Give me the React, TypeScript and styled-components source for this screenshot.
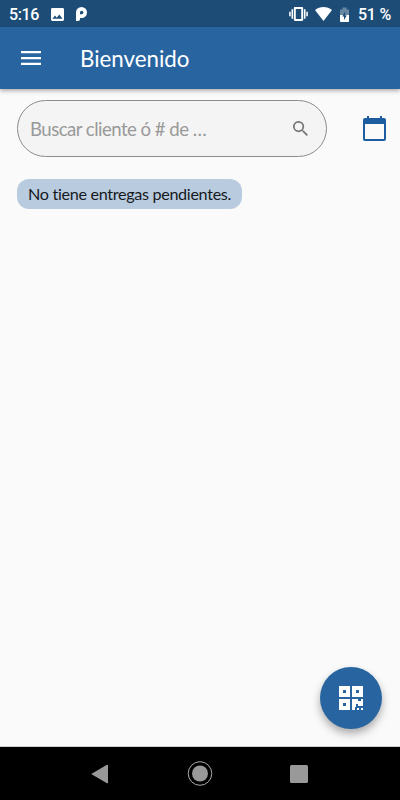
import React from "react";
import styled, { createGlobalStyle } from "styled-components";

const GlobalStyle = createGlobalStyle`
  * { box-sizing: border-box; }
  html, body, #root { margin: 0; height: 100%; }
  body { background: #fafafa; overflow: hidden; }
`;

const Screen = styled.div`
  width: 400px;
  height: 800px;
  display: flex;
  flex-direction: column;
  background: #fafafa;
  font-family: Lato, sans-serif;
  font-variant-ligatures: none;
`;

const StatusBar = styled.div`
  height: 27px;
  flex: none;
  display: flex;
  align-items: center;
  background: #1d4d77;
  color: #fff;
  font: 500 16px/27px Roboto, sans-serif;
  letter-spacing: -0.4px;
  padding: 1px 9px 0;
  white-space: nowrap;
`;

const Clock = styled.span`
  width: 42px;
`;

const Battery = styled.span`
  width: 33px;
  letter-spacing: -0.25px;
`;

const StatusIcon = styled.svg<{ $gap: number }>`
  display: block;
  flex: none;
  margin-right: ${(p) => p.$gap}px;
`;

const StatusGroup = styled.div`
  display: flex;
  align-items: center;
  margin-left: auto;
`;

const AppBar = styled.header`
  height: 62px;
  flex: none;
  display: flex;
  align-items: center;
  padding-left: 21px;
  gap: 39px;
  background: #2865a0;
  box-shadow: 0 2px 4px rgba(0, 0, 0, 0.3);
`;

const Title = styled.h1`
  margin: 0;
  padding-top: 1px;
  color: #fff;
  font-size: 22.3px;
  font-weight: 400;
  line-height: 28px;
`;

const PlainButton = styled.button`
  display: block;
  padding: 0;
  border: 0;
  background: none;
  svg { display: block; }
`;

const Content = styled.main`
  flex: 1;
  display: flex;
  flex-direction: column;
  align-items: flex-start;
  padding: 11px 14px 17px 17px;
`;

const SearchRow = styled.div`
  display: flex;
  align-items: center;
  justify-content: space-between;
  width: 100%;
  height: 57px;
`;

const SearchField = styled.div`
  display: flex;
  align-items: center;
  justify-content: space-between;
  width: 309.5px;
  height: 57px;
  padding: 0 18px 0 12px;
  border: 1px solid #8c8c8c;
  border-radius: 29px;
  background: #f4f4f4;
  color: #999;
  font-size: 18.6px;
  letter-spacing: -0.53px;
  line-height: 24px;
`;

const Notice = styled.div`
  width: 225px;
  height: 30px;
  margin-top: 22px;
  padding-left: 11px;
  border-radius: 12px;
  background: #b9ccdf;
  color: #15191d;
  font-size: 16.2px;
  letter-spacing: -0.33px;
  line-height: 30px;
  white-space: nowrap;
`;

const ScanButton = styled(PlainButton)`
  display: flex;
  align-items: center;
  justify-content: center;
  width: 62px;
  height: 62px;
  margin-top: auto;
  margin-right: 4px;
  align-self: flex-end;
  border-radius: 50%;
  background: #2865a0;
  box-shadow: 0 4px 7px rgba(0, 0, 0, 0.22), 0 6px 12px rgba(0, 0, 0, 0.12);
`;

const NavBar = styled.nav`
  height: 54px;
  flex: none;
  display: flex;
  align-items: center;
  justify-content: space-between;
  padding: 0 92px 0 91px;
  background: #000;
  border-top: 1px solid #d0d0d0;
`;

export default function App() {
  return (
    <>
      <GlobalStyle />
      <Screen>
        <StatusBar>
          <Clock>5:16</Clock>
          <StatusIcon $gap={12} width="13" height="13" viewBox="0 0 18 18" fill="#fff">
            <path d="M18 16V2a2 2 0 0 0-2-2H2a2 2 0 0 0-2 2v14c0 1.1.9 2 2 2h14a2 2 0 0 0 2-2zM5.500 10.500l2.500 3.010L11.500 9l4.500 6H2z" />
          </StatusIcon>
          <StatusIcon $gap={0} width="11" height="14" viewBox="0 0 11 14">
            <path fill="#fff" fillRule="evenodd" d="M0 5.500A5.500 5.500 0 1 1 5.500 11H4v1.200A1.800 1.800 0 0 1 2.200 14H0zM4 7.200h1.700a1.700 1.700 0 1 0-1.700-1.700z" />
          </StatusIcon>
          <StatusGroup>
            <StatusIcon $gap={7} width="19" height="14" viewBox="0 0 24 18" fill="#fff">
              <path d="M0 12h2V6H0zm3 3h2V3H3zm19-9v6h2V6zm-3 9h2V3h-2zM16.500 0h-9C6.670 0 6 .67 6 1.500v15c0 .83.67 1.500 1.500 1.500h9c.83 0 1.500-.67 1.500-1.500v-15c0-.83-.67-1.500-1.500-1.500zM15.500 15.500H8.500V2.500h7z" />
            </StatusIcon>
            <StatusIcon $gap={8} width="17" height="14" viewBox="0 0 18 14" preserveAspectRatio="none">
              <path fill="#fff" d="M0 3C5-1 13-1 18 3L9 14z" />
            </StatusIcon>
            <StatusIcon $gap={9} width="9" height="15" viewBox="0 0 9 15">
              <path fill="#6787a5" d="M0 2.500h2.500V.5h4v2H9V8H0z" />
              <path fill="#fff" d="M0 8h9v6.200q0 .8-.8.8H.8q-.8 0-.8-.8z" />
              <path fill="#1d4d77" d="M5.200 4.500v4h1.600L4 13V9.500H2.300z" />
            </StatusIcon>
            <Battery>51 %</Battery>
          </StatusGroup>
        </StatusBar>
        <AppBar>
          <PlainButton aria-label="Menú">
            <svg width="20" height="14" viewBox="0 0 20 14" fill="#fff">
              <path d="M0 0h20v2.300H0zM0 5.900h20v2.300H0zM0 11.700h20v2.300H0z" />
            </svg>
          </PlainButton>
          <Title>Bienvenido</Title>
        </AppBar>
        <Content>
          <SearchRow>
            <SearchField>
              <span>Buscar cliente ó # de …</span>
              <svg width="15" height="15" viewBox="3 3 17.500 17.500" fill="#777">
                <path d="M15.500 14h-.79l-.28-.27A6.500 6.500 0 1 0 13.730 14.430l.27.28v.79l5 4.990L20.490 19zM9.500 14a4.500 4.500 0 1 1 0-9 4.500 4.500 0 0 1 0 9z" />
              </svg>
            </SearchField>
            <PlainButton aria-label="Calendario">
              <svg width="23" height="25" viewBox="0 0 23 25">
                <path fill="#1c5c9f" fillRule="evenodd" d="M4 0h2v2h11V0h2v2h2q2 0 2 2v19q0 2-2 2H2q-2 0-2-2V4q0-2 2-2h2zM2 8v15h19V8z" />
              </svg>
            </PlainButton>
          </SearchRow>
          <Notice>No tiene entregas pendientes.</Notice>
          <ScanButton aria-label="Escanear código">
            <svg width="24" height="24" viewBox="0 0 24 24">
              <path fill="#fff" fillRule="evenodd" d="M0 0h11v11H0zM4 4v3h3V4zM13 0h11v11H13zM17 4v3h3V4zM0 13h11v11H0zM4 17v3h3v-3zM13 13h6v2h3v-2h2v7h-5v-2h-2v3h-1v3h-3zM18 22h2v2h-2zM22 22h2v2h-2z" />
            </svg>
          </ScanButton>
        </Content>
        <NavBar>
          <PlainButton aria-label="Atrás">
            <svg width="17" height="20" viewBox="0 0 17 20"><path fill="#999" d="M16 .8q1-.5 1 .5v17.400q0 1-1 .5L1 10.500q-1-.5 0-1z" /></svg>
          </PlainButton>
          <PlainButton aria-label="Inicio">
            <svg width="28" height="25" viewBox="-2.500 0 28 25">
              <circle cx="12.500" cy="12.500" r="11.800" fill="none" stroke="#aaa" />
              <circle cx="12.500" cy="12.500" r="8" fill="#999" />
            </svg>
          </PlainButton>
          <PlainButton aria-label="Recientes">
            <svg width="18" height="18" viewBox="0 0 18 18"><rect width="18" height="18" rx="1.500" fill="#999" /></svg>
          </PlainButton>
        </NavBar>
      </Screen>
    </>
  );
}
